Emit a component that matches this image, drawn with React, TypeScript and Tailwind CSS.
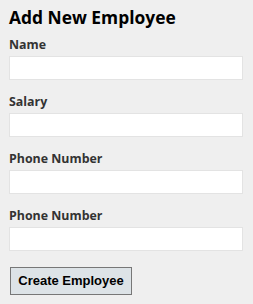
import React from "react";

const Field = ({ label }: { label: string }) => (
  <div className="flex flex-col mt-[14px] first:mt-0">
    <label className="block text-[12.4px] leading-[16px] font-bold text-[#333333] mb-[3px]">{label}</label>
    <input type="text" className="block w-[234px] h-[24px] bg-white border border-[#e3e3e3] outline-none" />
  </div>
);

export default function App() {
  return (
    <div className="w-[253px] h-[304px] bg-[#efefef] pl-[9px] pt-[5px] font-['Open_Sans','Lato',sans-serif]">
      <h1 className="text-[17.4px] leading-[24px] font-bold text-black">Add New Employee</h1>
      <div className="mt-[8px] flex flex-col">
        <Field label="Name" />
        <Field label="Salary" />
        <Field label="Phone Number" />
        <Field label="Phone Number" />
      </div>
      <button className="mt-[16px] ml-[1px] w-[122px] h-[28px] bg-[#dde3e7] border border-[#777777] text-[13px] font-bold text-black font-['Liberation_Sans',Arial,sans-serif]">
        Create Employee
      </button>
    </div>
  );
}
